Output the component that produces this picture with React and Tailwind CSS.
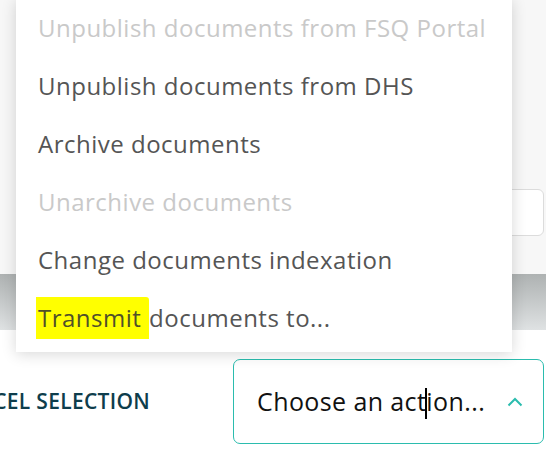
import React from "react";

const items = [
    { label: "Unpublish documents from FSQ Portal", disabled: true },
    { label: "Unpublish documents from DHS" },
    { label: "Archive documents" },
    { label: "Unarchive documents", disabled: true },
    { label: "Change documents indexation" },
];

const ActionMenu = () => {
    return (
        <div className="absolute left-[16px] top-[-1px] w-[496px] bg-white pb-[5px] shadow-[0_2px_14px_rgba(0,0,0,0.16)]">
            {items.map((item) => (
                <div
                    key={item.label}
                    className={`h-[58px] flex items-center pl-[22px] text-[24px] tracking-[0.5px] ${
                        item.disabled ? "text-[#c9c9c9]" : "text-[#555555]"
                    }`}
                >
                    {item.label}
                </div>
            ))}
            <div className="h-[58px] flex items-center pl-[22px] text-[24px] tracking-[0.5px] text-[#555555]">
                <span className="bg-[#ffff00] text-[#50502a] -ml-[2px] pl-[2px] pr-[1px] py-[3px] rounded-tr-[3px] whitespace-pre">
                    {"Transmit "}
                </span>
                <span>documents to...</span>
            </div>
        </div>
    );
};

const ActionSelect = () => {
    return (
        <div className="w-[311px] h-[85px] rounded-[7px] border-[1.5px] border-[#2bbcae] bg-white flex items-center pl-[23px] pr-[20px]">
            <span className="text-[25px] tracking-[0.4px] text-[#111111] whitespace-nowrap">
                Choose an act
                <span className="relative inline-block w-0 align-middle">
                    <span className="absolute left-[-1px] top-[-16px] w-[2px] h-[31px] bg-black" />
                </span>
                ion...
            </span>
            <svg className="ml-auto" width="16" height="10" viewBox="0 0 16 10" fill="none">
                <path d="M1.5 8.5 L8 2 L14.5 8.5" stroke="#2bbcae" strokeWidth="2" />
            </svg>
        </div>
    );
};

const App = () => {
    return (
        <div
            className="relative w-[546px] h-[449px] overflow-hidden bg-white"
            style={{ fontFamily: '"Open Sans", "Liberation Sans", sans-serif' }}
        >
            <div className="h-[274px] bg-[#f7f7f7] relative">
                <div className="absolute right-[2px] top-[189px] w-[60px] h-[47px] border border-[#dcdcdc] rounded-[6px] bg-white" />
            </div>
            <div className="h-[56px] bg-gradient-to-b from-[#aeb2b2] to-[#dfe2e3]" />
            <div className="flex pt-[29px]">
                <div className="w-[233px] h-[85px] overflow-hidden flex items-center justify-end pr-[83px]">
                    <span className="whitespace-nowrap text-[21px] font-semibold text-[#0e3d4c] tracking-[0.3px]">
                        CANCEL SELECTION
                    </span>
                </div>
                <ActionSelect />
            </div>
            <ActionMenu />
        </div>
    );
};

export default App;
